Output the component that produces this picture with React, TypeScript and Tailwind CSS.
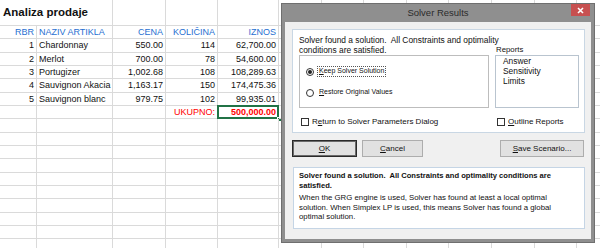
import React from "react";

type C = { t: string; r?: boolean; c?: string };

const blue = "text-[#1f6fd1]";

const data: C[][] = [
  [{ t: "RBR", r: true, c: blue }, { t: "NAZIV ARTIKLA", c: blue }, { t: "CENA", r: true, c: blue }, { t: "KOLIČINA", r: true, c: blue }, { t: "IZNOS", r: true, c: blue }],
  [{ t: "1", r: true }, { t: "Chardonnay" }, { t: "550.00", r: true }, { t: "114", r: true }, { t: "62,700.00", r: true }],
  [{ t: "2", r: true }, { t: "Merlot" }, { t: "700.00", r: true }, { t: "78", r: true }, { t: "54,600.00", r: true }],
  [{ t: "3", r: true }, { t: "Portugizer" }, { t: "1,002.68", r: true }, { t: "108", r: true }, { t: "108,289.63", r: true }],
  [{ t: "4", r: true }, { t: "Sauvignon Akacia" }, { t: "1,163.17", r: true }, { t: "150", r: true }, { t: "174,475.36", r: true }],
  [{ t: "5", r: true }, { t: "Sauvignon blanc" }, { t: "979.75", r: true }, { t: "102", r: true }, { t: "99,935.01", r: true }],
  [{ t: "" }, { t: "" }, { t: "" }, { t: "UKUPNO:", r: true, c: "text-[#ff0000]" }, { t: "500,000.00", r: true, c: "text-[#ff0000] font-bold" }],
];

const NCOLS = 13;
const NROWS = 17;

function Sheet() {
  const cells: React.ReactNode[] = [];
  // title row
  cells.push(
    <div key="title" className="col-span-2 border-r border-b border-[#dadada] flex items-center pl-[3px] whitespace-nowrap">
      <span className="text-[11.5px] font-bold text-[#111]">Analiza prodaje</span>
    </div>
  );
  for (let ci = 2; ci < NCOLS; ci++) {
    cells.push(<div key={`t-${ci}`} className="border-r border-b border-[#dadada]" />);
  }
  for (let ri = 0; ri < NROWS; ri++) {
    for (let ci = 0; ci < NCOLS; ci++) {
      const cell = data[ri]?.[ci];
      const selected = ri === 6 && ci === 4;
      cells.push(
        <div
          key={`${ri}-${ci}`}
          className={`relative border-r border-b border-[#dadada] flex items-center whitespace-nowrap px-[2px] text-[9px] leading-[12px] text-[#111] ${cell?.r ? "justify-end" : "justify-start"}`}
        >
          {cell && <span className={cell.c ?? ""}>{cell.t}</span>}
          {selected && (
            <>
              <div className="absolute left-[-1px] top-[-1px] right-[-1px] bottom-[-1px] border-2 border-[#217346]" />
              <div className="absolute right-[-4px] bottom-[-4px] w-[5px] h-[5px] bg-[#217346] border border-white" />
            </>
          )}
        </div>
      );
    }
  }
  return (
    <div className="grid grid-cols-[37px_76px_53px_52px_61px_repeat(8,42.6px)] grid-rows-[26px_repeat(17,13.33px)] w-[600px] h-[248px] overflow-hidden">
      {cells}
    </div>
  );
}

function Btn({ children, w, def }: { children: React.ReactNode; w: string; def?: boolean }) {
  return (
    <div
      className={`${w} h-[17px] flex items-center justify-center text-[8px] text-[#111] bg-[#e1e1e1] ${def ? "border border-[#2a2a2a] shadow-[inset_0_0_0_1px_#6a6a6a]" : "border border-[#adadad]"}`}
    >
      {children}
    </div>
  );
}

function Dialog() {
  return (
    <div className="absolute left-[281px] top-[3px] w-[314px] h-[240px] bg-[#8f8f8f] border border-[#6f6f6f] flex flex-col">
      <div className="h-[18px] flex items-center justify-center text-[9.5px] text-[#2b2b2b]">Solver Results</div>
      <div className="absolute right-[4px] top-[0px] w-[19px] h-[12px] bg-[#c75050] flex items-center justify-center">
        <svg width="7" height="7" viewBox="0 0 7 7">
          <path d="M1 1 L6 6 M6 1 L1 6" stroke="white" strokeWidth="1.6" />
        </svg>
      </div>
      <div className="mx-[3px] mb-[3px] flex-1 bg-[#f0f0f0] flex flex-col pt-[7px] pl-[7px] pr-[6px]">
        {/* top panel */}
        <div className="h-[104px] bg-white border border-[#c9d7e4] flex flex-col pl-[6px] pr-[5px] pt-[5px]">
          <div className="text-[8.4px] leading-[10px] text-[#111] whitespace-nowrap">
            Solver found a solution.&nbsp; All Constraints and optimality
          </div>
          <div className="flex gap-[6px]">
            <div className="w-[190px] flex flex-col">
              <div className="text-[8.4px] leading-[10px] text-[#111] whitespace-nowrap">conditions are satisfied.</div>
              <div className="h-[53px] border border-[#bdbdbd] bg-white flex flex-col pl-[6px] pt-[9px] gap-[8px]">
                <div className="h-[13px] flex items-center gap-[3px]">
                  <div className="w-[8px] h-[8px] rounded-full border border-[#333] bg-white flex items-center justify-center">
                    <div className="w-[4px] h-[4px] rounded-full bg-[#222]" />
                  </div>
                  <div className="border border-dotted border-[#555] px-[1px] h-[11px] flex items-center text-[7px] text-[#111] whitespace-nowrap">
                    <span className="underline">K</span>eep Solver Solution
                  </div>
                </div>
                <div className="h-[13px] flex items-center gap-[3px]">
                  <div className="w-[8px] h-[8px] rounded-full border border-[#333] bg-white" />
                  <div className="px-[2px] text-[7px] text-[#111] whitespace-nowrap">
                    <span className="underline">R</span>estore Original Values
                  </div>
                </div>
              </div>
            </div>
            <div className="w-[84px] flex flex-col">
              <div className="text-[7.8px] leading-[10px] text-[#111] pl-[1px] whitespace-nowrap">Reports</div>
              <div className="h-[53px] border border-[#b9c4cf] bg-white flex flex-col pl-[7px] pt-[1px] text-[8.4px] leading-[9.8px] text-[#111]">
                <span>Answer</span>
                <span>Sensitivity</span>
                <span>Limits</span>
              </div>
            </div>
          </div>
          <div className="mt-[7px] h-[14px] flex items-center">
            <div className="w-[196px] flex items-center gap-[3px] pl-[2px]">
              <div className="w-[8px] h-[8px] border border-[#333] bg-white" />
              <span className="text-[8px] text-[#111] whitespace-nowrap">
                R<span className="underline">e</span>turn to Solver Parameters Dialog
              </span>
            </div>
            <div className="flex items-center gap-[3px] pl-[2px]">
              <div className="w-[8px] h-[8px] border border-[#333] bg-white" />
              <span className="text-[8px] text-[#111] whitespace-nowrap">
                <span className="underline">O</span>utline Reports
              </span>
            </div>
          </div>
        </div>
        {/* buttons */}
        <div className="mt-[7px] flex items-center pr-[1px]">
          <Btn w="w-[65px]" def>
            <span className="underline">O</span>K
          </Btn>
          <div className="w-[5px]" />
          <Btn w="w-[61px]">
            <span className="underline">C</span>ancel
          </Btn>
          <div className="flex-1" />
          <Btn w="w-[84px]">
            <span className="underline">S</span>ave Scenario...
          </Btn>
        </div>
        {/* message panel */}
        <div className="mt-[10px] ml-[1px] h-[62px] bg-white border border-[#c5d5e5] pl-[5px] pt-[3px] text-[#111] whitespace-nowrap">
          <div className="text-[7.6px] leading-[9.5px] font-bold">
            Solver found a solution.&nbsp; All Constraints and optimality conditions are
            <br />
            satisfied.
          </div>
          <div className="mt-[3px] text-[7.8px] leading-[9.7px]">
            When the GRG engine is used, Solver has found at least a local optimal
            <br />
            solution. When Simplex LP is used, this means Solver has found a global
            <br />
            optimal solution.
          </div>
        </div>
      </div>
    </div>
  );
}

export default function App() {
  return (
    <div className="relative w-[600px] h-[248px] overflow-hidden bg-white font-['Liberation_Sans',Arial,sans-serif]">
      <Sheet />
      <Dialog />
    </div>
  );
}
